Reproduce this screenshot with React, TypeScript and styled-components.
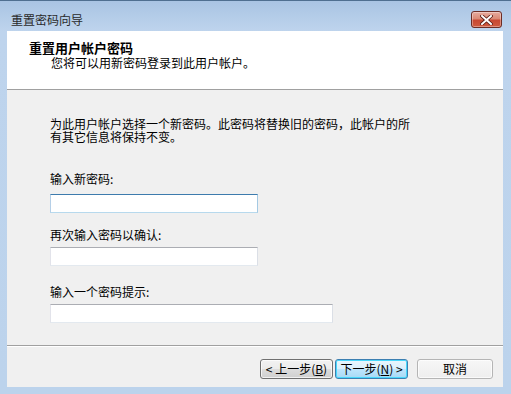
import React from 'react';
import styled, { createGlobalStyle, css } from 'styled-components';

const GlobalStyle = createGlobalStyle`
  html, body {
    margin: 0;
    padding: 0;
    width: 511px;
    height: 394px;
    overflow: hidden;
  }
  body {
    font-family: "Noto Sans CJK SC", "DejaVu Sans", sans-serif;
    font-size: 12px;
    color: #000;
  }
`;

const Window = styled.div`
  width: 511px;
  height: 394px;
  box-sizing: border-box;
  display: flex;
  flex-direction: column;
  background: linear-gradient(#a9c4e3 0px, #bed4ed 30px, #bcd3ec 100%);
  border-top: 1px solid #4f6f90;
`;

const TitleBar = styled.div`
  height: 30px;
  display: flex;
  justify-content: space-between;
  align-items: flex-start;
  padding: 10px 9px 0 11px;
  box-sizing: border-box;
`;

const Title = styled.span`
  font-size: 12px;
  line-height: 17px;
  color: #2a2a2a;
`;

const CloseButton = styled.button`
  width: 31px;
  height: 17px;
  padding: 0;
  border: 1px solid #6d2d25;
  border-radius: 3px;
  background: linear-gradient(#e6ab9f 0%, #db8a75 45%, #c84832 55%, #d05a3f 100%);
  box-shadow: inset 0 0 0 1px rgba(255, 255, 255, 0.35);
  display: flex;
  align-items: center;
  justify-content: center;
`;

const Client = styled.div`
  flex: 1;
  margin: 0 8px 7px 7px;
  display: flex;
  flex-direction: column;
  background: #f0f0f0;
`;

const Header = styled.div`
  height: 59px;
  box-sizing: border-box;
  background: #fff;
  border-bottom: 1px solid #a0a0a0;
  padding: 9px 0 0 22px;
`;

const HeaderTitle = styled.div`
  font-size: 13px;
  font-weight: bold;
  line-height: 16px;
`;

const HeaderSub = styled.div`
  font-size: 12px;
  line-height: 13px;
  padding-left: 22px;
`;

const Body = styled.div`
  flex: 1;
  padding: 27px 0 0 43px;
  display: flex;
  flex-direction: column;
  align-items: flex-start;
`;

const Intro = styled.p`
  margin: 0;
  width: 362px;
  line-height: 13px;
`;

const Label = styled.label<{ $top: number }>`
  display: block;
  margin-top: ${(p) => p.$top}px;
  line-height: 14px;
`;

const TextBox = styled.input<{ $top: number; $width: number; $focused?: boolean }>`
  margin: ${(p) => p.$top}px 0 0 0;
  width: ${(p) => p.$width}px;
  height: 19px;
  box-sizing: border-box;
  padding: 0 3px;
  background: #fff;
  outline: none;
  border: 1px solid;
  border-color: #abadb3 #dbdfe6 #e3e9ef #e2e3ea;
  ${(p) =>
    p.$focused &&
    css`
      border-color: #3d7bad #a4c9e3 #b7d9ed #b5cfe7;
    `}
`;

const Footer = styled.div`
  height: 42px;
  box-sizing: border-box;
  border-top: 1px solid #a0a0a0;
  box-shadow: inset 0 1px 0 #fff;
  padding: 13px 10px 0 0;
  display: flex;
  justify-content: flex-end;
  align-items: flex-start;
`;

const Button = styled.button<{ $variant?: 'default' | 'plain' }>`
  width: 73px;
  height: 20px;
  padding: 0;
  font-family: inherit;
  font-size: 12px;
  line-height: 18px;
  color: #000;
  border: 1px solid #707070;
  border-radius: 3px;
  background: linear-gradient(#f2f2f2 0%, #ebebeb 50%, #dddddd 51%, #cfcfcf 100%);
  box-shadow: inset 0 0 0 1px rgba(255, 255, 255, 0.7);
  margin-left: 2px;

  ${(p) =>
    p.$variant === 'default' &&
    css`
      border-color: #3c7fb1;
      background: linear-gradient(#eaf6fd 0%, #d9f0fc 50%, #bee6fd 51%, #a7d9f5 100%);
      box-shadow: inset 0 0 0 1px #48d8fb;
    `}

  ${(p) =>
    p.$variant === 'plain' &&
    css`
      width: 76px;
      margin-left: 9px;
      border-color: #b5b5b5;
      background: linear-gradient(#f7f7f7, #eeeeee);
    `}
`;

const Accel = styled.span`
  text-decoration: underline;
`;

export default function App() {
  return (
    <>
      <GlobalStyle />
      <Window>
        <TitleBar>
          <Title>重置密码向导</Title>
          <CloseButton aria-label="关闭">
            <svg width="13" height="10" viewBox="0 0 13 10">
              <path
                d="M2 1 L11 9 M11 1 L2 9"
                stroke="#5a1c14"
                strokeWidth="3.6"
                strokeLinecap="square"
              />
              <path
                d="M2 1 L11 9 M11 1 L2 9"
                stroke="#ffffff"
                strokeWidth="2"
                strokeLinecap="square"
              />
            </svg>
          </CloseButton>
        </TitleBar>
        <Client>
          <Header>
            <HeaderTitle>重置用户帐户密码</HeaderTitle>
            <HeaderSub>您将可以用新密码登录到此用户帐户。</HeaderSub>
          </Header>
          <Body>
            <Intro>
              为此用户帐户选择一个新密码。此密码将替换旧的密码，此帐户的所有其它信息将保持不变。
            </Intro>
            <Label $top={29}>输入新密码:</Label>
            <TextBox type="password" $top={8} $width={208} $focused />
            <Label $top={15}>再次输入密码以确认:</Label>
            <TextBox type="password" $top={5} $width={208} />
            <Label $top={19}>输入一个密码提示:</Label>
            <TextBox type="text" $top={5} $width={283} />
          </Body>
          <Footer>
            <Button>
              &lt; 上一步(<Accel>B</Accel>)
            </Button>
            <Button $variant="default">
              下一步(<Accel>N</Accel>) &gt;
            </Button>
            <Button $variant="plain">取消</Button>
          </Footer>
        </Client>
      </Window>
    </>
  );
}
